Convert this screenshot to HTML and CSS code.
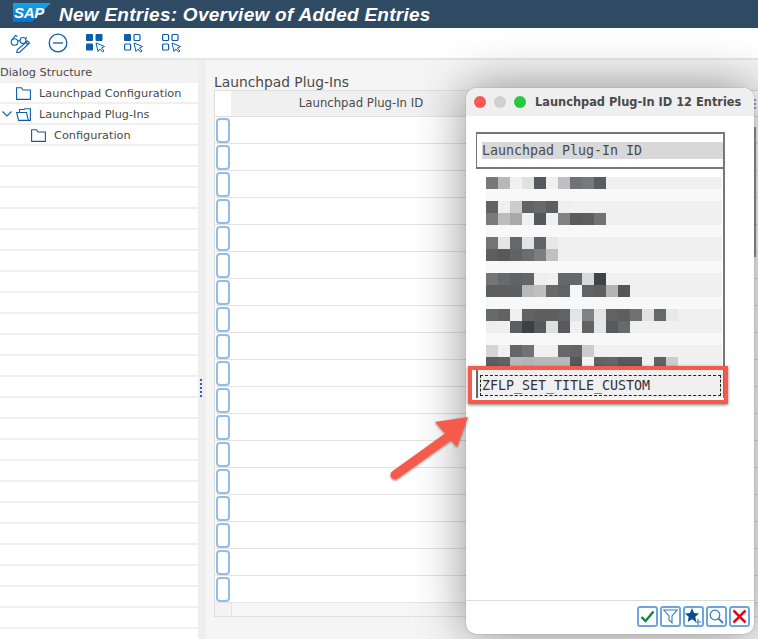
FILE: index.html
```html
<!DOCTYPE html>
<html lang="en">
<head>
    <meta charset="UTF-8">
    <title>New Entries: Overview of Added Entries</title>
    <link rel="stylesheet" href="styles.css">
</head>
<body>
    <div class="app">
        <header class="title-bar">
            <div class="sap-logo">
                <svg width="38" height="19" viewBox="0 0 38 19"><defs><linearGradient id="sapblue" x1="0" y1="0" x2="0" y2="1"><stop offset="0" stop-color="#13a4ee"/><stop offset="1" stop-color="#0a70c8"/></linearGradient></defs><polygon points="0,0 38,0 19,19 0,19" fill="url(#sapblue)"/></svg>
                <span class="sap-text">SAP</span>
            </div>
            <h1>New Entries: Overview of Added Entries</h1>
        </header>

        <div class="toolbar">
            <svg class="tool" width="20" height="20" viewBox="0 0 20 20" fill="none" stroke="#0b5ea8" stroke-width="1.1"><circle cx="4.500" cy="9" r="3.300"/><circle cx="13" cy="7.500" r="3"/><path d="M7.600 8 10 7.500M1.500 7.500 5.500 2.500 7.500 3.500M15.500 6 16.500 4"/><path d="M17.500 8 19.500 10 10 19 6.500 20 7.500 16.500Z" fill="#fff"/><path d="M16 9.500 18 11.500"/></svg>
            <svg class="tool" width="20" height="20" viewBox="0 0 20 20" fill="none" stroke="#0b5ea8" stroke-width="1.3"><circle cx="10" cy="10" r="8.800"/><path d="M5 10H15"/></svg>
            <svg class="tool" width="20" height="20" viewBox="0 0 20 20"><g fill="#0b5ea8"><rect x="0" y="1" width="7" height="7" rx="1"/><rect x="9.500" y="1" width="7" height="7" rx="1"/><rect x="0" y="10.500" width="7" height="7" rx="1"/></g><path d="M10 10 18.500 13.500 15.500 15 18 18 16.500 19 14 16 12 18.500Z" fill="#fff" stroke="#0b5ea8"/></svg>
            <svg class="tool" width="20" height="20" viewBox="0 0 20 20"><rect x="0" y="1" width="7" height="7" rx="1" fill="#0b5ea8"/><g fill="none" stroke="#0b5ea8" stroke-width="1.2"><rect x="10" y="1.500" width="6" height="6" rx="1"/><rect x="0.600" y="11" width="6" height="6" rx="1"/></g><path d="M10 10 18.500 13.500 15.500 15 18 18 16.500 19 14 16 12 18.500Z" fill="#fff" stroke="#0b5ea8"/></svg>
            <svg class="tool" width="20" height="20" viewBox="0 0 20 20"><g fill="none" stroke="#0b5ea8" stroke-width="1.2"><rect x="0.600" y="1.500" width="6" height="6" rx="1"/><rect x="10" y="1.500" width="6" height="6" rx="1"/><rect x="0.600" y="11" width="6" height="6" rx="1"/></g><path d="M10 10 18.500 13.500 15.500 15 18 18 16.500 19 14 16 12 18.500Z" fill="#fff" stroke="#0b5ea8"/></svg>
        </div>

        <div class="main">
            <aside class="tree">
                <div class="tree-head">Dialog Structure</div>
                <div class="tree-row lvl-1">
                    <svg class="folder" width="15" height="13" viewBox="0 0 15 13" fill="none" stroke="#0b5ea8" stroke-width="1.1"><path d="M.6 12.400V.8H5.500L7 3H14.400V12.400Z"/></svg>
                    Launchpad Configuration
                </div>
                <div class="tree-row lvl-1 has-arrow">
                    <svg class="arrow" width="10" height="6" viewBox="0 0 10 6" fill="none" stroke="#0b5ea8" stroke-width="1.1"><path d="M.5.5 5 5 9.500.5"/></svg>
                    <svg class="folder" width="15" height="13" viewBox="0 0 15 13" fill="none" stroke="#0b5ea8" stroke-width="1.1"><path d="M2.500 12.400.6 4.500H10.500L12.400 12.400ZM3.500 4.500V1.500H8L9 .8H14.400V12.400H12.400"/></svg>
                    Launchpad Plug-Ins
                </div>
                <div class="tree-row lvl-2">
                    <svg class="folder" width="15" height="13" viewBox="0 0 15 13" fill="none" stroke="#0b5ea8" stroke-width="1.1"><path d="M.6 12.400V.8H5.500L7 3H14.400V12.400Z"/></svg>
                    Configuration
                </div>
                <div class="tree-empty"></div>
            </aside>

            <div class="sash">
                <span></span><span></span><span></span><span></span><span></span>
            </div>

            <section class="content">
                <h2>Launchpad Plug-Ins</h2>
                <div class="table">
                    <div class="table-head">
                        <div class="corner"></div>
                        <div class="col-title">Launchpad Plug-In ID</div>
                    </div>
                    <div class="row"><button class="sel"></button></div>
                    <div class="row"><button class="sel"></button></div>
                    <div class="row"><button class="sel"></button></div>
                    <div class="row"><button class="sel"></button></div>
                    <div class="row"><button class="sel"></button></div>
                    <div class="row"><button class="sel"></button></div>
                    <div class="row"><button class="sel"></button></div>
                    <div class="row"><button class="sel"></button></div>
                    <div class="row"><button class="sel"></button></div>
                    <div class="row"><button class="sel"></button></div>
                    <div class="row"><button class="sel"></button></div>
                    <div class="row"><button class="sel"></button></div>
                    <div class="row"><button class="sel"></button></div>
                    <div class="row"><button class="sel"></button></div>
                    <div class="row"><button class="sel"></button></div>
                    <div class="row"><button class="sel"></button></div>
                    <div class="row"><button class="sel"></button></div>
                    <div class="row"><button class="sel"></button></div>
                    <div class="table-foot"><div class="corner"></div></div>
                </div>
            </section>
        </div>
    </div>

    <div class="page-scroll"></div>
    <div class="page-dots"><span></span><span></span><span></span></div>

    <div class="popup">
        <div class="popup-title">
            <span class="light red"></span>
            <span class="light grey"></span>
            <span class="light green"></span>
            <span class="popup-name">Launchpad Plug-In ID 12 Entries</span>
        </div>
        <div class="popup-body">
            <div class="list-box">
                <div class="list-head"><div class="list-head-text">Launchpad Plug-In ID</div></div>
                <svg class="blur" width="247" height="192" viewBox="0 0 247 192" shape-rendering="crispEdges">
                    <rect x="10" y="0" width="236" height="192" fill="#f0f0f0"/>
                    <g fill="#f8f8f8"><rect x="10" y="12" width="236" height="12"/><rect x="10" y="48" width="236" height="12"/><rect x="10" y="84" width="236" height="12"/><rect x="10" y="120" width="236" height="12"/><rect x="10" y="156" width="236" height="12"/></g>
                    <g><rect x="10" y="0" width="12" height="12" fill="#76787a"/><rect x="22" y="0" width="12" height="12" fill="#b8b8b8"/><rect x="46" y="0" width="12" height="12" fill="#e0e2e2"/><rect x="58" y="0" width="12" height="12" fill="#55585c"/><rect x="82" y="0" width="12" height="12" fill="#c0c0c2"/><rect x="94" y="0" width="12" height="12" fill="#707274"/><rect x="106" y="0" width="12" height="12" fill="#78797b"/><rect x="118" y="0" width="12" height="12" fill="#5a5c60"/></g>
                    <g><rect x="10" y="24" width="12" height="12" fill="#606264"/><rect x="34" y="24" width="12" height="12" fill="#cccccc"/><rect x="46" y="24" width="12" height="12" fill="#606264"/><rect x="58" y="24" width="12" height="12" fill="#68696b"/><rect x="70" y="24" width="12" height="12" fill="#5c5e60"/><rect x="82" y="24" width="12" height="12" fill="#eeeeee"/></g>
                    <g><rect x="10" y="36" width="12" height="12" fill="#78797b"/><rect x="22" y="36" width="12" height="12" fill="#bcbcbc"/><rect x="34" y="36" width="12" height="12" fill="#a8a8a8"/><rect x="58" y="36" width="12" height="12" fill="#55585c"/><rect x="82" y="36" width="12" height="12" fill="#808183"/><rect x="94" y="36" width="12" height="12" fill="#585a5e"/><rect x="106" y="36" width="12" height="12" fill="#5c5e60"/><rect x="118" y="36" width="12" height="12" fill="#707274"/></g>
                    <g><rect x="10" y="60" width="12" height="12" fill="#727476"/><rect x="22" y="60" width="12" height="12" fill="#e6e6e6"/><rect x="34" y="60" width="12" height="12" fill="#666769"/><rect x="46" y="60" width="12" height="12" fill="#e2e4e4"/><rect x="58" y="60" width="12" height="12" fill="#606264"/><rect x="70" y="60" width="12" height="12" fill="#e8e8e8"/></g>
                    <g><rect x="10" y="72" width="12" height="12" fill="#5c5e60"/><rect x="22" y="72" width="12" height="12" fill="#58595c"/><rect x="34" y="72" width="12" height="12" fill="#606264"/><rect x="46" y="72" width="12" height="12" fill="#6c6d6f"/><rect x="58" y="72" width="12" height="12" fill="#7c7d7f"/><rect x="70" y="72" width="12" height="12" fill="#c0c0c0"/></g>
                    <g><rect x="10" y="96" width="12" height="12" fill="#747577"/><rect x="22" y="96" width="12" height="12" fill="#68696b"/><rect x="34" y="96" width="12" height="12" fill="#606264"/><rect x="46" y="96" width="12" height="12" fill="#646567"/><rect x="58" y="96" width="12" height="12" fill="#eeeeee"/><rect x="82" y="96" width="12" height="12" fill="#666769"/><rect x="94" y="96" width="12" height="12" fill="#666769"/><rect x="106" y="96" width="12" height="12" fill="#d8d8d8"/><rect x="118" y="96" width="12" height="12" fill="#404246"/></g>
                    <g><rect x="10" y="108" width="12" height="12" fill="#5c5e60"/><rect x="22" y="108" width="12" height="12" fill="#5c5e60"/><rect x="34" y="108" width="12" height="12" fill="#5c5e60"/><rect x="46" y="108" width="12" height="12" fill="#b8b8b8"/><rect x="58" y="108" width="12" height="12" fill="#c0c0c0"/><rect x="70" y="108" width="12" height="12" fill="#68696b"/><rect x="82" y="108" width="12" height="12" fill="#606264"/><rect x="94" y="108" width="12" height="12" fill="#f6f6f6"/><rect x="106" y="108" width="12" height="12" fill="#606264"/><rect x="118" y="108" width="12" height="12" fill="#5c5e60"/><rect x="130" y="108" width="12" height="12" fill="#b4b4b4"/><rect x="142" y="108" width="12" height="12" fill="#54565a"/></g>
                    <g><rect x="10" y="132" width="12" height="12" fill="#68696b"/><rect x="22" y="132" width="12" height="12" fill="#606264"/><rect x="46" y="132" width="12" height="12" fill="#606264"/><rect x="58" y="132" width="12" height="12" fill="#5c5e60"/><rect x="70" y="132" width="12" height="12" fill="#5c5e60"/><rect x="82" y="132" width="12" height="12" fill="#606264"/><rect x="94" y="132" width="12" height="12" fill="#e4e4e4"/><rect x="106" y="132" width="12" height="12" fill="#808284"/><rect x="118" y="132" width="12" height="12" fill="#e4e4e4"/><rect x="130" y="132" width="12" height="12" fill="#606264"/><rect x="142" y="132" width="12" height="12" fill="#5c5e60"/><rect x="154" y="132" width="12" height="12" fill="#707274"/><rect x="166" y="132" width="12" height="12" fill="#e0e2e2"/><rect x="178" y="132" width="12" height="12" fill="#66676b"/><rect x="190" y="132" width="12" height="12" fill="#e8e8e8"/></g>
                    <g><rect x="10" y="144" width="12" height="12" fill="#eeeeee"/><rect x="34" y="144" width="12" height="12" fill="#5c5e60"/><rect x="46" y="144" width="12" height="12" fill="#3e4044"/><rect x="58" y="144" width="12" height="12" fill="#58595c"/><rect x="70" y="144" width="12" height="12" fill="#e0e0e0"/><rect x="82" y="144" width="12" height="12" fill="#58595c"/><rect x="106" y="144" width="12" height="12" fill="#606264"/><rect x="118" y="144" width="12" height="12" fill="#e4e6e6"/><rect x="130" y="144" width="12" height="12" fill="#58595c"/><rect x="142" y="144" width="12" height="12" fill="#68696b"/></g>
                    <g><rect x="10" y="168" width="12" height="12" fill="#d4d4d6"/><rect x="34" y="168" width="12" height="12" fill="#646567"/><rect x="46" y="168" width="12" height="12" fill="#707274"/><rect x="82" y="168" width="12" height="12" fill="#666769"/><rect x="94" y="168" width="12" height="12" fill="#646567"/><rect x="106" y="168" width="12" height="12" fill="#cccccc"/></g>
                    <g><rect x="10" y="180" width="12" height="12" fill="#5c5e60"/><rect x="22" y="180" width="12" height="12" fill="#606264"/><rect x="34" y="180" width="12" height="12" fill="#b8b8b8"/><rect x="46" y="180" width="12" height="12" fill="#b4b4b4"/><rect x="58" y="180" width="12" height="12" fill="#b8b8b8"/><rect x="70" y="180" width="12" height="12" fill="#b8b8b8"/><rect x="82" y="180" width="12" height="12" fill="#b8b8b8"/><rect x="94" y="180" width="12" height="12" fill="#56585c"/><rect x="106" y="180" width="12" height="12" fill="#f4f4f4"/><rect x="118" y="180" width="12" height="12" fill="#606264"/><rect x="130" y="180" width="12" height="12" fill="#646567"/><rect x="142" y="180" width="12" height="12" fill="#58595c"/><rect x="154" y="180" width="12" height="12" fill="#58595c"/><rect x="178" y="180" width="12" height="12" fill="#606264"/><rect x="190" y="180" width="12" height="12" fill="#cccccc"/></g>
                </svg>
                <div class="picked">
                    <div class="picked-focus">ZFLP_SET_TITLE_CUSTOM</div>
                </div>
            </div>
        </div>
        <div class="popup-foot">
            <button class="pop-btn"><svg width="15" height="13" viewBox="0 0 15 13" fill="none" stroke="#0f8a3c" stroke-width="2.4"><path d="M1.500 7 5.500 11 13.500 1.500"/></svg></button>
            <button class="pop-btn"><svg width="15" height="15" viewBox="0 0 15 15" fill="none" stroke="#2f7fc4" stroke-width="1.100"><path d="M.8 1H14.200L9 7V13.800L6 11V7Z"/></svg></button>
            <button class="pop-btn"><svg width="17" height="17" viewBox="0 0 17 17"><path d="M7 0 9 5 14 5.500 10.300 8.800 11.300 14 7 11.200 2.700 14 3.700 8.800 0 5.500 5 5Z" fill="#0b4c94"/><path d="M13 11V17M10 14H16" stroke="#2f7fc4" stroke-width="1.100"/></svg></button>
            <button class="pop-btn"><svg width="15" height="15" viewBox="0 0 15 15" fill="none" stroke="#2f7fc4" stroke-width="1.300"><circle cx="6" cy="6" r="4.800"/><path d="M9.500 9.500 14 14" stroke-width="1.800"/></svg></button>
            <button class="pop-btn"><svg width="15" height="15" viewBox="0 0 15 15" fill="none" stroke="#d8101c" stroke-width="2.500"><path d="M1.500 1.500 13.500 13.500M13.500 1.500 1.500 13.500"/></svg></button>
        </div>
    </div>

    <div class="callout"></div>
    <svg class="callout-arrow" width="90" height="80" viewBox="0 0 90 80">
        <defs><filter id="soft" x="-20%" y="-20%" width="140%" height="140%"><feDropShadow dx="0" dy="1" stdDeviation="1.200" flood-color="#000" flood-opacity=".45"/></filter></defs>
        <g filter="url(#soft)"><path d="M7 65 60 27" stroke="#f65a4c" stroke-width="9" stroke-linecap="round"/><path d="M80 7 47 12 69 37Z" fill="#f65a4c"/></g>
    </svg>
</body>
</html>
```

FILE: styles.css
```css
html, body {
    margin: 0;
    height: 100%;
    overflow: hidden;
    background-color: #f5f5f5;
    font-family: "DejaVu Sans", sans-serif;
    color: #4a4a4a;
}
.app {
    height: 639px;
    display: flex;
    flex-direction: column;
}
.title-bar {
    height: 28px;
    flex: none;
    display: flex;
    align-items: center;
    background-color: #2f4a63;
    padding-left: 13px;
}
.sap-logo {
    position: relative;
    width: 38px;
    height: 19px;
    margin-top: -3px;
}
.sap-logo svg {
    display: block;
}
.sap-text {
    position: absolute;
    left: 1px;
    top: 0;
    font: bold italic 15px/19px "Liberation Sans", sans-serif;
    color: #fff;
    letter-spacing: -0.3px;
}
.title-bar h1 {
    margin: 0 0 0 8px;
    font: bold italic 19px/27px "Liberation Sans", sans-serif;
    letter-spacing: 0.27px;
    color: #fff;
}
.toolbar {
    height: 30px;
    flex: none;
    box-sizing: content-box;
    display: flex;
    align-items: center;
    gap: 18px;
    padding-left: 10px;
    background-color: #fff;
    border-bottom: 2px solid #e6e6e6;
}
.tool {
    flex: none;
    width: 20px;
}
.main {
    flex: 1;
    display: flex;
    min-height: 0;
}
.tree {
    width: 198px;
    flex: none;
    display: flex;
    flex-direction: column;
    background-color: #fff;
    font-size: 11.3px;
}
.tree-head {
    height: 23px;
    line-height: 25px;
    background-color: #f2f2f2;
    flex: none;
}
.tree-row {
    height: 21px;
    flex: none;
    box-sizing: border-box;
    display: flex;
    align-items: center;
    padding-top: 1px;
    border-bottom: 2px solid #f0f0f0;
}
.lvl-1 {
    padding-left: 16px;
}
.lvl-1.has-arrow {
    padding-left: 2px;
}
.lvl-2 {
    padding-left: 31px;
}
.folder {
    flex: none;
    margin-right: 8px;
}
.arrow {
    flex: none;
    margin-right: 4px;
}
.tree-empty {
    flex: 1;
    background-image: repeating-linear-gradient(to bottom, #fff 0, #fff 19px, #f0f0f0 19px, #f0f0f0 21px);
}
.sash {
    width: 8px;
    flex: none;
    display: flex;
    flex-direction: column;
    align-items: center;
    gap: 2px;
    padding-top: 319px;
    box-sizing: border-box;
    background-color: #eeeeee;
}
.sash span {
    width: 2px;
    height: 2px;
    margin-right: 2px;
    background-color: #1b66b8;
}
.content {
    flex: 1;
    padding-left: 8px;
    min-width: 0;
}
.content h2 {
    margin: 15px 0 0;
    font-size: 13.8px;
    font-weight: normal;
    line-height: 15px;
}
.table {
    border: 1px solid #dfdfdf;
    border-right: 0;
    background-color: #fff;
}
.table-head {
    height: 26px;
    display: flex;
    border-bottom: 1px solid #dfdfdf;
    box-sizing: border-box;
}
.corner {
    width: 16px;
    flex: none;
    background-color: #fff;
}
.col-title {
    width: 260px;
    flex: none;
    text-align: center;
    background-color: #f0f0f0;
    font-size: 11.7px;
    line-height: 25px;
}
.row {
    height: 27px;
    box-sizing: border-box;
    border-bottom: 1px solid #e4e4e4;
    padding: 1px 0 0 1px;
}
.sel {
    display: block;
    width: 14px;
    height: 25px;
    padding: 0;
    box-sizing: border-box;
    background-color: #fff;
    border: 2px solid #93bde3;
    border-radius: 4px;
}
.table-foot {
    height: 13px;
    background-color: #f6f6f6;
}
.table-foot .corner {
    height: 13px;
    background-color: #f3f3f3;
    border-right: 1px solid #e4e4e4;
}
.page-scroll {
    position: absolute;
    left: 754px;
    top: 127px;
    width: 2px;
    height: 130px;
    background-color: #9a9a9a;
}
.page-dots {
    position: absolute;
    left: 754px;
    top: 99px;
    display: flex;
    flex-direction: column;
    gap: 2px;
}
.page-dots span {
    width: 2px;
    height: 2px;
    background-color: #7fa9d2;
}
.popup {
    position: absolute;
    left: 466px;
    top: 88px;
    width: 288px;
    height: 546px;
    display: flex;
    flex-direction: column;
    background-color: #fff;
    border-radius: 10px;
    box-shadow: 0 0 50px rgba(0, 0, 0, 0.45), 0 0 1px rgba(0, 0, 0, 0.5);
}
.popup-title {
    height: 28px;
    flex: none;
    display: flex;
    align-items: center;
    padding-left: 8px;
    background-color: #efefef;
    border-radius: 10px 10px 0 0;
}
.light {
    width: 12px;
    height: 12px;
    border-radius: 50%;
    margin-right: 8px;
}
.light.red {
    background-color: #fc5753;
}
.light.grey {
    background-color: #d0d0d0;
}
.light.green {
    background-color: #27c83f;
}
.popup-name {
    margin-left: 1px;
    font: bold 11.4px "DejaVu Sans", sans-serif;
    color: #4a4a4a;
    white-space: nowrap;
}
.popup-body {
    flex: 1;
    padding: 16px 0 0 10px;
    min-height: 0;
}
.list-box {
    position: relative;
    width: 247px;
    border-right: 2px solid #777;
    font: 13.3px "DejaVu Sans Mono", monospace;
    color: #4a4a4a;
}
.list-head {
    height: 37px;
    box-sizing: border-box;
    padding: 8px 0 0 5px;
    border: 1px solid #777;
    border-right: 0;
    border-width: 2px 0 2px 1px;
}
.list-head-text {
    background-color: #d8d8d8;
    height: 17px;
    line-height: 17px;
}
.blur {
    display: block;
    margin-top: 8px;
}
.picked {
    height: 32px;
    box-sizing: border-box;
    margin-top: -3px;
    position: relative;
    padding: 9px 2px 0 2px;
    background-color: #f0f0f0;
    border-left: 2px solid #666;
}
.picked-focus {
    height: 21px;
    box-sizing: border-box;
    padding-left: 1px;
    line-height: 19px;
    border: 1px dashed #222;
    color: #333;
}
.popup-foot {
    height: 34px;
    flex: none;
    box-sizing: border-box;
    display: flex;
    justify-content: flex-end;
    gap: 2px;
    padding: 5px 4px 0 0;
    border-top: 1px solid #dcdcdc;
}
.pop-btn {
    width: 21px;
    height: 21px;
    padding: 0;
    display: flex;
    align-items: center;
    justify-content: center;
    box-sizing: border-box;
    background-color: #fff;
    border: 2px solid #6ea6da;
    border-radius: 3px;
}
.callout {
    position: absolute;
    left: 468px;
    top: 366px;
    width: 260px;
    height: 38px;
    box-sizing: border-box;
    border: 4px solid #f65a4c;
    box-shadow: 0 1px 3px rgba(0, 0, 0, 0.5);
}
.callout-arrow {
    position: absolute;
    left: 388px;
    top: 410px;
}
```
